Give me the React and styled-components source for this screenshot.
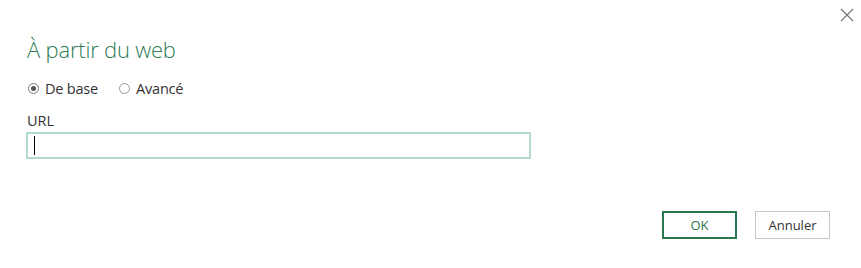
import styled, { createGlobalStyle } from "styled-components";

const Global = createGlobalStyle`
  html, body {
    margin: 0;
    padding: 0;
    background: #fff;
  }
  body {
    font-family: "Open Sans", "Noto Sans", sans-serif;
    color: #333;
  }
`;

const Dialog = styled.div`
  width: 861px;
  height: 268px;
  box-sizing: border-box;
  display: flex;
  flex-direction: column;
  padding: 0 31px 29px 26px;
  position: relative;
  background: #fff;
`;

const CloseButton = styled.button`
  position: absolute;
  top: 8px;
  right: 7px;
  width: 14px;
  height: 14px;
  padding: 0;
  border: none;
  background: none;
  cursor: pointer;
  display: flex;
`;

const Titre = styled.h1`
  margin: 34px 0 0 1px;
  font-size: 22px;
  font-weight: 300;
  line-height: 30px;
  color: #2f7d57;
  letter-spacing: -0.2px;
`;

const RadioGroupe = styled.div`
  display: flex;
  align-items: center;
  gap: 19px;
  margin-top: 14px;
  height: 20px;
`;

const RadioLabel = styled.label`
  display: flex;
  align-items: center;
  gap: 6px;
  font-size: 14.5px;
  color: #333;
  letter-spacing: -0.2px;
`;

const RadioRond = styled.span`
  width: 11px;
  height: 11px;
  box-sizing: border-box;
  border-radius: 50%;
  border: 1px solid ${(p) => (p.$coche ? "#777" : "#999")};
  margin-left: 2px;
  display: flex;
  align-items: center;
  justify-content: center;
  &::after {
    content: "";
    width: 5px;
    height: 5px;
    border-radius: 50%;
    background: ${(p) => (p.$coche ? "#555" : "transparent")};
  }
`;

const Libelle = styled.div`
  margin-top: 15px;
  margin-left: 1px;
  font-size: 14.5px;
  line-height: 16px;
  color: #333;
`;

const ChampUrl = styled.div`
  margin-top: 3px;
  width: 505px;
  height: 27px;
  box-sizing: border-box;
  border: 2px solid #b1dccb;
  background: #fff;
  display: flex;
  align-items: center;
  padding-left: 6px;
`;

const Curseur = styled.span`
  width: 1px;
  height: 19px;
  background: #000;
`;

const Boutons = styled.div`
  margin-top: auto;
  display: flex;
  justify-content: flex-end;
  gap: 18px;
`;

const Bouton = styled.button`
  width: 75px;
  height: 28px;
  box-sizing: border-box;
  background: #fff;
  font-family: "Open Sans", "Noto Sans", sans-serif;
  font-size: 13px;
  border: ${(p) => (p.$primaire ? "2px solid #2a7650" : "1px solid #c6c6c6")};
  color: ${(p) => (p.$primaire ? "#2a7650" : "#333")};
  padding: 0;
  cursor: pointer;
`;

export default function App() {
  return (
    <>
      <Global />
      <Dialog>
        <CloseButton aria-label="Fermer">
          <svg width="14" height="14" viewBox="0 0 14 14">
            <path d="M1 1 L13 13 M13 1 L1 13" stroke="#777" strokeWidth="1.2" fill="none" />
          </svg>
        </CloseButton>
        <Titre>À partir du web</Titre>
        <RadioGroupe>
          <RadioLabel>
            <RadioRond $coche />
            De base
          </RadioLabel>
          <RadioLabel>
            <RadioRond />
            Avancé
          </RadioLabel>
        </RadioGroupe>
        <Libelle>URL</Libelle>
        <ChampUrl>
          <Curseur />
        </ChampUrl>
        <Boutons>
          <Bouton $primaire>OK</Bouton>
          <Bouton>Annuler</Bouton>
        </Boutons>
      </Dialog>
    </>
  );
}
